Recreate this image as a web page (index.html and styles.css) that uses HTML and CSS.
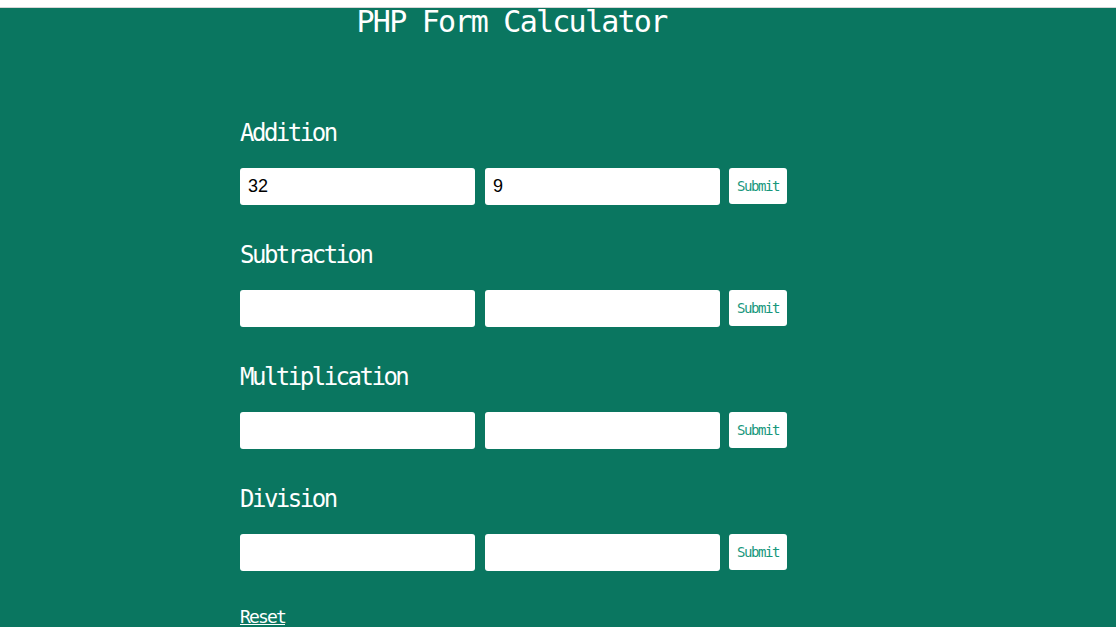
FILE: index.html
```html
<!DOCTYPE html>
<html>
<head>
<meta charset="utf-8">
<title>PHP Form Calculator</title>
<link rel="stylesheet" href="styles.css">
</head>
<body>
<div class="topstrip"></div>
<main class="page">
  <div class="wrap">
    <h1 class="title">PHP Form Calculator</h1>
    <form class="calc">
      <section class="op">
        <h2 class="op-title">Addition</h2>
        <div class="row">
          <input class="field" type="text" value="32">
          <input class="field" type="text" value="9">
          <button class="submit" type="button">Submit</button>
        </div>
      </section>
      <section class="op">
        <h2 class="op-title">Subtraction</h2>
        <div class="row">
          <input class="field" type="text">
          <input class="field" type="text">
          <button class="submit" type="button">Submit</button>
        </div>
      </section>
      <section class="op">
        <h2 class="op-title">Multiplication</h2>
        <div class="row">
          <input class="field" type="text">
          <input class="field" type="text">
          <button class="submit" type="button">Submit</button>
        </div>
      </section>
      <section class="op">
        <h2 class="op-title">Division</h2>
        <div class="row">
          <input class="field" type="text">
          <input class="field" type="text">
          <button class="submit" type="button">Submit</button>
        </div>
      </section>
      <a class="reset" href="#">Reset</a>
    </form>
  </div>
</main>
</body>
</html>
```

FILE: styles.css
```css
html, body {
  margin: 0;
  padding: 0;
  background: #0a7660;
  overflow: hidden;
}
body {
  font-family: "DejaVu Sans Mono", monospace;
  color: #ffffff;
  height: 627px;
  display: flex;
  flex-direction: column;
}
.topstrip {
  height: 7px;
  flex-shrink: 0;
  background: #ffffff;
  border-bottom: 1px solid #d6d6d6;
}
.page {
  flex: 1;
  background: #0a7660;
}
.wrap {
  width: 547px;
  margin-left: 240px;
}
.title {
  margin: 0;
  padding-right: 4px;
  font-weight: normal;
  font-size: 30px;
  line-height: 28px;
  letter-spacing: -1.75px;
  text-align: center;
  white-space: nowrap;
}
.calc {
  margin-top: 82px;
  display: flex;
  flex-direction: column;
}
.op {
  display: flex;
  flex-direction: column;
  gap: 20px;
  margin-bottom: 35px;
}
.op-title {
  margin: 0;
  font-weight: normal;
  font-size: 24px;
  line-height: 30px;
  letter-spacing: -2.5px;
}
.row {
  display: flex;
  gap: 10px;
  align-items: flex-start;
}
.field {
  width: 235px;
  height: 37px;
  box-sizing: border-box;
  border: none;
  border-radius: 3px;
  background: #ffffff;
  padding: 0 8px;
  font-family: "Liberation Sans", Arial, sans-serif;
  font-size: 18px;
  color: #000000;
  outline: none;
}
.submit {
  margin-left: -1px;
  width: 58px;
  height: 36px;
  border: none;
  border-radius: 3px;
  background: #ffffff;
  color: #17977c;
  font-family: "DejaVu Sans Mono", monospace;
  font-size: 14px;
  letter-spacing: -1.45px;
  padding: 0;
}
.reset {
  align-self: flex-start;
  color: #ffffff;
  font-size: 18px;
  line-height: 22px;
  letter-spacing: -1.84px;
  text-decoration: underline;
}
```
